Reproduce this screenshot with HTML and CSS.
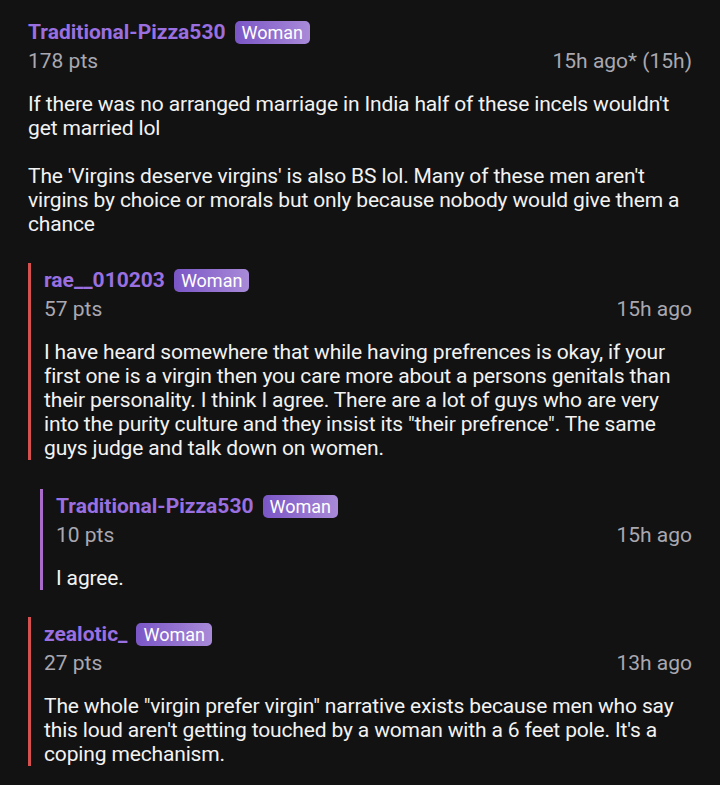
FILE: index.html
```html
<!DOCTYPE html>
<html lang="en">
<head>
  <meta charset="UTF-8" />
  <meta name="viewport" content="width=device-width, initial-scale=1.0">
  <title>Comments</title>
  <link rel="stylesheet" href="styles.css">
</head>
<body>
  <div class="thread">
    <div class="comment top">
      <div class="head">
        <span class="author">Traditional-Pizza530</span>
        <span class="flair">Woman</span>
      </div>
      <div class="meta">
        <span>178 pts</span>
        <span>15h ago* (15h)</span>
      </div>
      <div class="body">
        <p>If there was no arranged marriage in India half of these incels wouldn't get married lol</p>
        <p>The 'Virgins deserve virgins' is also BS lol. Many of these men aren't virgins by choice or morals but only because nobody would give them a chance</p>
      </div>
    </div>

    <div class="comment reply lvl1">
      <div class="head">
        <span class="author">rae__010203</span>
        <span class="flair">Woman</span>
      </div>
      <div class="meta">
        <span>57 pts</span>
        <span>15h ago</span>
      </div>
      <div class="body">
        <p>I have heard somewhere that while having prefrences is okay, if your first one is a virgin then you care more about a persons genitals than their personality. I think I agree. There are a lot of guys who are very into the purity culture and they insist its "their prefrence". The same guys judge and talk down on women.</p>
      </div>
    </div>

    <div class="comment reply lvl2">
      <div class="head">
        <span class="author">Traditional-Pizza530</span>
        <span class="flair">Woman</span>
      </div>
      <div class="meta">
        <span>10 pts</span>
        <span>15h ago</span>
      </div>
      <div class="body">
        <p>I agree.</p>
      </div>
    </div>

    <div class="comment reply lvl1">
      <div class="head">
        <span class="author">zealotic_</span>
        <span class="flair">Woman</span>
      </div>
      <div class="meta">
        <span>27 pts</span>
        <span>13h ago</span>
      </div>
      <div class="body">
        <p>The whole "virgin prefer virgin" narrative exists because men who say this loud aren't getting touched by a woman with a 6 feet pole. It's a coping mechanism.</p>
      </div>
    </div>
  </div>
</body>
</html>
```

FILE: styles.css
```css
body {
  margin: 0;
  font-family: Roboto, 'Liberation Sans', sans-serif;
  background: #121212;
  color: #f2f2f2;
}
.thread {
  display: flex;
  flex-direction: column;
  padding: 18px 28px 0 28px;
}
.comment {
  display: flex;
  flex-direction: column;
}
.head {
  display: flex;
  align-items: center;
  gap: 9px;
  height: 28px;
}
.author {
  color: #9a6fe0;
  font-weight: bold;
  font-size: 21px;
}
.flair {
  background: linear-gradient(90deg, #7a56c6, #a88ad8);
  color: #fff;
  font-size: 18px;
  padding: 1px 7px;
  border-radius: 5px;
  line-height: 21px;
}
.meta {
  display: flex;
  justify-content: space-between;
  color: #a9a8b0;
  font-size: 21px;
  line-height: 30px;
}
.body {
  margin-top: 16px;
  font-size: 21px;
  letter-spacing: -0.15px;
  line-height: 24px;
}
.body p {
  margin: 0 0 24px 0;
}
.body p:last-child {
  margin-bottom: 0;
}
.reply {
  padding: 3px 0 0 13px;
  border-left: 3px solid #d4514f;
}
.top {
  margin-bottom: 27px;
}
.lvl1 {
  margin-bottom: 29px;
}
.lvl2 {
  margin-left: 12px;
  margin-bottom: 27px;
  border-left-color: #a86cc8;
}
```
